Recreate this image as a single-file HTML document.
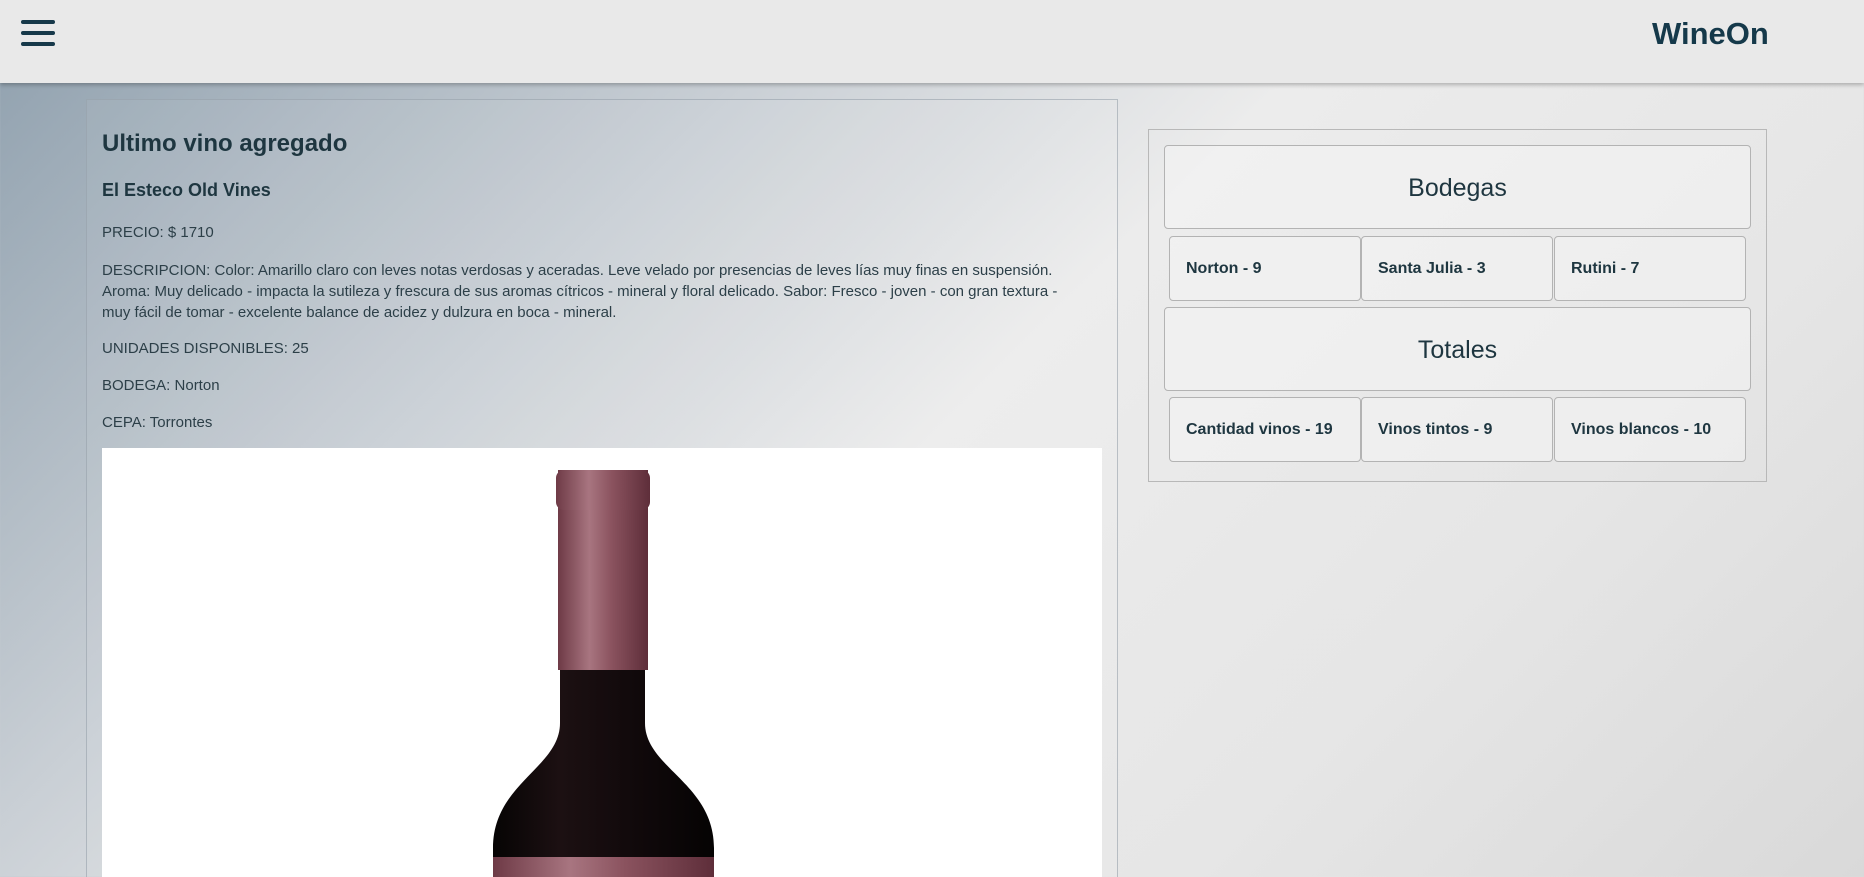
<!DOCTYPE html>
<html><head><meta charset="utf-8">
<style>
*{box-sizing:border-box;margin:0;padding:0}
html,body{width:1864px;height:877px;overflow:hidden}
body{font-family:"Liberation Sans",sans-serif;color:#1e3640;background:linear-gradient(135deg,#8e9fad 0%,#c9cfd5 30%,#ececec 50%,#e6e6e6 75%,#d9d9d9 100%);position:relative}
.hdr{position:absolute;left:0;top:0;width:1864px;height:83px;background:#e9e9e9;box-shadow:0 2px 4px rgba(0,0,0,.25);z-index:2}
.ham{position:absolute;left:21px;top:20px;width:34px}
.ham div{height:4px;background:#17394a;border-radius:2px;margin-bottom:7px}
.logo{position:absolute;left:1652px;top:16px;font-size:31px;font-weight:bold;color:#15394a}
.card{position:absolute;left:86px;top:99px;width:1032px;height:800px;border:1px solid rgba(150,160,170,.6);background:rgba(255,255,255,.05)}
.t{position:absolute;left:102px;white-space:nowrap}
.desc{position:absolute;left:102px;top:260px;width:985px;font-size:15px;line-height:21px;color:#2c3f48}
.sm{font-size:15px;color:#2c3f48}
.img{position:absolute;left:102px;top:448px;width:1000px;height:440px;background:#fff}
.panel{position:absolute;left:1148px;top:129px;width:619px;height:353px;border:1px solid #b8b8b8}
.big{position:absolute;left:1164px;width:587px;height:84px;border:1px solid #b3b3b3;border-radius:4px;background:rgba(245,245,245,.5);text-align:center;font-size:25px;line-height:84px;color:#1e3640}
.it{position:absolute;width:192px;height:65px;border:1px solid #b3b3b3;border-radius:4px;background:rgba(245,245,245,.5);font-size:16px;font-weight:bold;line-height:63px;padding-left:16px;color:#1e3640}
</style></head><body>
<div class="hdr"><div class="ham"><div></div><div></div><div></div></div><div class="logo">WineOn</div></div>
<div class="card"></div>
<div class="t" style="top:130px;font-size:24px;font-weight:bold">Ultimo vino agregado</div>
<div class="t" style="top:180px;font-size:18px;font-weight:bold">El Esteco Old Vines</div>
<div class="t sm" style="top:224px">PRECIO: $ 1710</div>
<div class="desc">DESCRIPCION: Color: Amarillo claro con leves notas verdosas y aceradas. Leve velado por presencias de leves lías muy finas en suspensión. Aroma: Muy delicado - impacta la sutileza y frescura de sus aromas cítricos - mineral y floral delicado. Sabor: Fresco - joven - con gran textura - muy fácil de tomar - excelente balance de acidez y dulzura en boca - mineral.</div>
<div class="t sm" style="top:340px">UNIDADES DISPONIBLES: 25</div>
<div class="t sm" style="top:377px">BODEGA: Norton</div>
<div class="t sm" style="top:414px">CEPA: Torrontes</div>
<div class="img">
<svg width="1000" height="440" style="position:absolute;left:0;top:0">
<defs>
<linearGradient id="foil" x1="0" x2="1"><stop offset="0" stop-color="#6e3a46"/><stop offset=".35" stop-color="#a87580"/><stop offset=".6" stop-color="#8a525e"/><stop offset="1" stop-color="#5e2e3a"/></linearGradient>
<linearGradient id="gl" x1="0" x2="1"><stop offset="0" stop-color="#060404"/><stop offset=".3" stop-color="#1c1012"/><stop offset=".6" stop-color="#120a0c"/><stop offset="1" stop-color="#050303"/></linearGradient>
</defs>
<path d="M458 222 L458 275 C458 320 391 335 391 400 L391 440 L612 440 L612 400 C612 335 543 320 543 275 L543 222 Z" fill="url(#gl)"/>
<rect x="456" y="22" width="90" height="200" fill="url(#foil)"/>
<rect x="454" y="22" width="94" height="40" rx="8" fill="url(#foil)"/>
<rect x="391" y="409" width="221" height="40" fill="url(#foil)"/>
</svg></div>
<div class="panel"></div>
<div class="big" style="top:145px">Bodegas</div>
<div class="it" style="left:1169px;top:236px">Norton - 9</div>
<div class="it" style="left:1361px;top:236px">Santa Julia - 3</div>
<div class="it" style="left:1554px;top:236px">Rutini - 7</div>
<div class="big" style="top:307px">Totales</div>
<div class="it" style="left:1169px;top:397px">Cantidad vinos - 19</div>
<div class="it" style="left:1361px;top:397px">Vinos tintos - 9</div>
<div class="it" style="left:1554px;top:397px">Vinos blancos - 10</div>
</body></html>
